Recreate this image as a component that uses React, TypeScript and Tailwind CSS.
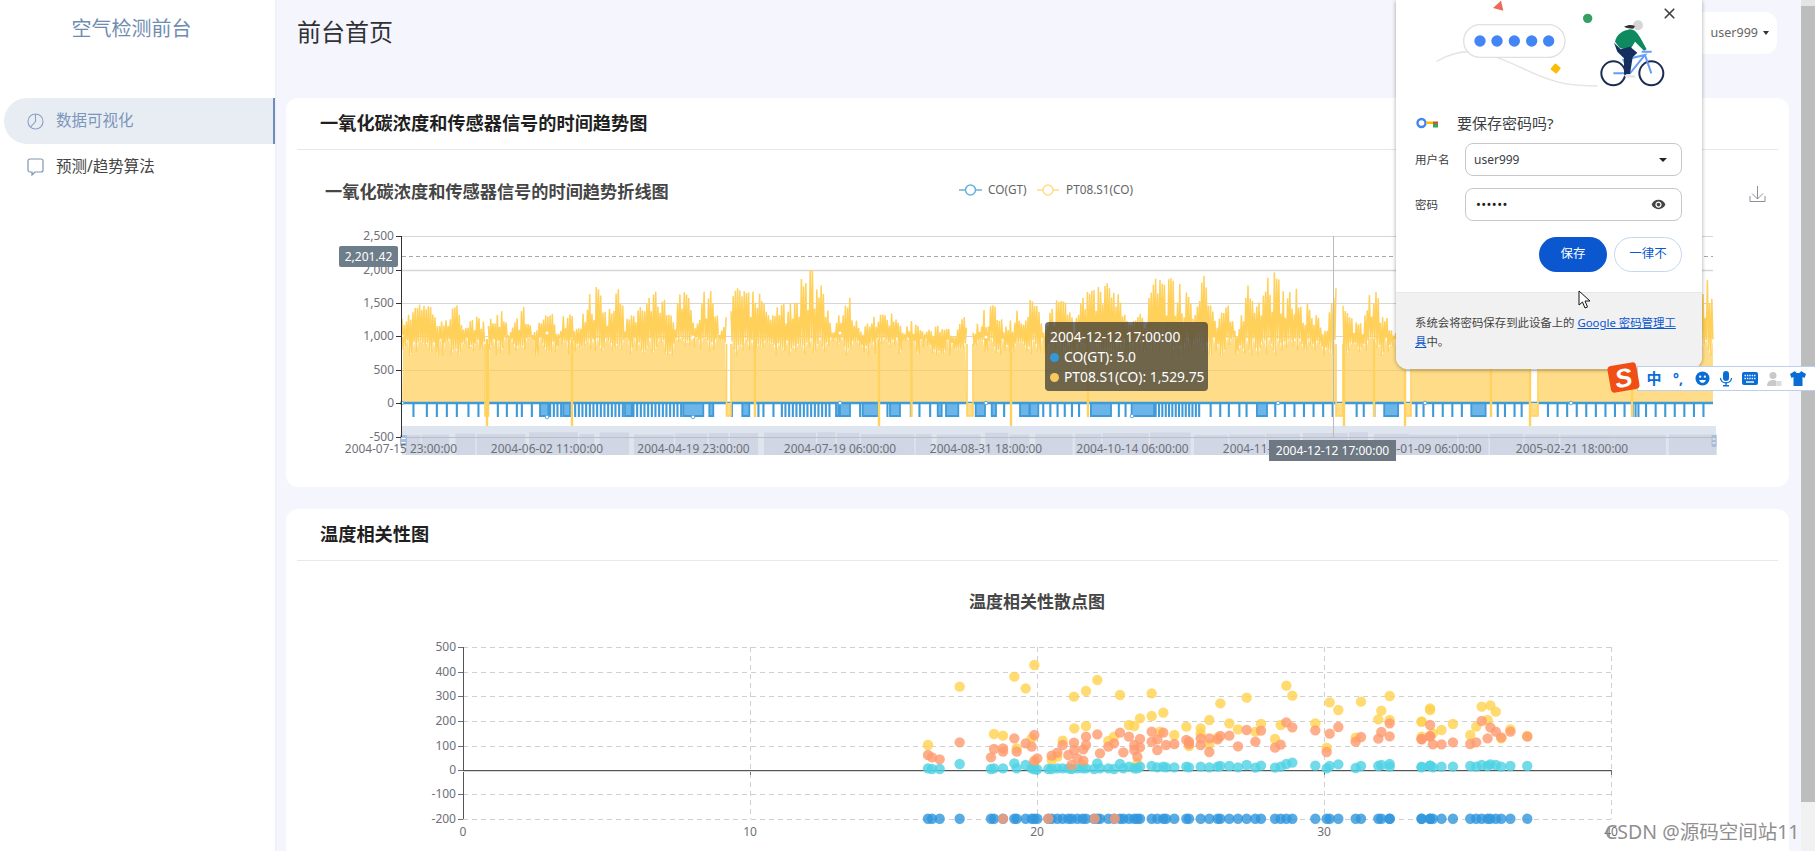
import React from 'react';
import { X } from 'lucide-react';

// seeded random so the picture stays the same each run
function makeRand(seed: number) {
  let s = seed;
  return () => {
    s = (s * 16807) % 2147483647;
    return s / 2147483647;
  };
}

type P = [number, number];
const fromZoom = (list: P[], ox: number, oy: number, fx: number): P[] =>
  list.map(([x, y]) => [ox + x / fx, oy + y / 3] as P);

// upper edge of the yellow series, read off the reference
const envelope: P[] = [
  ...fromZoom(
    [[215, 300], [285, 235], [330, 310], [350, 250], [385, 260], [400, 330], [435, 290], [465, 310], [490, 290], [512, 265], [540, 340], [580, 260], [610, 340], [660, 255], [680, 340], [712, 260], [745, 330], [785, 200], [805, 205], [830, 290], [862, 200], [890, 300], [950, 240], [995, 200], [1030, 310], [1050, 205], [1075, 210], [1100, 290], [1132, 180], [1160, 280], [1170, 330], [1200, 230], [1225, 205], [1250, 215], [1275, 210], [1300, 235], [1320, 300], [1360, 235], [1400, 225], [1420, 160], [1445, 145]],
    330, 220, 3,
  ),
  ...fromZoom(
    [[125, 185], [145, 280], [165, 330], [190, 230], [210, 235], [240, 340], [290, 280], [320, 290], [340, 280], [370, 330], [400, 300], [430, 340], [470, 320], [500, 320], [520, 350], [552, 290], [565, 350], [590, 320], [605, 275], [645, 255], [665, 300], [680, 320], [712, 270], [730, 320], [750, 240]],
    780, 220, 3,
  ),
  ...fromZoom(
    [[25, 250], [40, 320], [70, 230], [105, 225], [130, 290], [170, 195], [230, 175], [265, 210], [290, 290], [320, 260], [345, 270], [370, 165], [435, 160], [480, 220], [522, 155], [540, 240], [565, 280], [590, 230], [620, 330], [655, 180], [680, 240], [716, 135], [745, 145], [770, 200], [808, 180], [840, 250], [890, 310], [915, 165], [930, 230], [960, 280], [1000, 300], [1020, 195], [1040, 190], [1060, 250], [1090, 330]],
    1030, 225, 3,
  ),
  [1450, 260], [1500, 250], [1600, 260], [1700, 290], [1713, 265],
];

const envAt = (x: number) => {
  for (let i = 1; i < envelope.length; i++) {
    if (x <= envelope[i][0]) {
      const [x0, y0] = envelope[i - 1];
      const [x1, y1] = envelope[i];
      return y0 + ((y1 - y0) * (x - x0)) / (x1 - x0 || 1);
    }
  }
  return 300;
};

const gaps: P[] = [[485, 488.5], [726.5, 731], [967, 973], [1336, 1343], [1405, 1411], [1530, 1538]];

function yellowSegments() {
  const rand = makeRand(4711);
  const edges = [402, ...gaps.flat(), 1713];
  const lines: string[] = [];
  const areas: string[] = [];
  for (let i = 0; i < edges.length; i += 2) {
    const pts: P[] = [];
    for (let x = edges[i], n = 0; x < edges[i + 1]; x += 1.1, n++) {
      const top = envAt(x);
      const r = rand();
      const y = n % 2 === 0 ? top + r * r * (345 - top) * 0.6 : 338 + rand() * 19;
      pts.push([x, y]);
    }
    lines.push(pts.map(([x, y]) => `${x.toFixed(1)},${y.toFixed(1)}`).join(' '));
    const low = pts.filter((_, k) => k % 2 === 1);
    areas.push(
      `${edges[i]},404 ` + low.map(([x, y]) => `${x.toFixed(1)},${y.toFixed(1)}`).join(' ') + ` ${edges[i + 1]},404`,
    );
  }
  return { lines, areas };
}

// stems and blocks of the blue series, as [from, to] spans below the zero line
function blueSpans(): P[] {
  const spans: P[] = [];
  const stems = (list: number[], ox: number, f: number) =>
    list.forEach((z) => spans.push([ox + z / f, ox + z / f + 0.3]));
  const block = (a: number, b: number, ox: number, f: number) => spans.push([ox + a / f, ox + b / f]);
  const dense = (a: number, b: number, step: number, ox: number, f: number) => {
    for (let z = a; z <= b; z += step) spans.push([ox + z / f, ox + z / f + 0.3]);
  };

  stems([250, 290, 320, 350, 380, 415, 445, 503, 530, 560, 575, 605], 330, 3);
  block(630, 655, 330, 3);
  dense(660, 696, 11, 330, 3);
  block(700, 720, 330, 3);
  dense(735, 880, 11, 330, 3);
  block(885, 905, 330, 3);
  dense(910, 1055, 11, 330, 3);
  block(1060, 1120, 330, 3);
  block(1138, 1150, 330, 3);
  stems([1205, 1285, 1300, 1330], 330, 3);
  block(1237, 1258, 330, 3);
  dense(1355, 1500, 11, 330, 3);

  block(168, 176, 780, 3);
  block(180, 210, 780, 3);
  stems([240, 322, 392, 418, 450, 672], 780, 3);
  block(248, 295, 780, 3);
  block(330, 360, 780, 3);
  block(473, 485, 780, 3);
  block(498, 535, 780, 3);
  block(587, 615, 780, 3);
  block(635, 648, 780, 3);
  block(720, 748, 780, 3);
  block(750, 775, 780, 3);

  stems([90, 105, 120, 135, 150, 165, 248, 262, 440, 460, 478, 500, 515, 575, 595, 615, 635, 655, 675, 695, 745, 760, 782, 870, 885, 905, 925, 945, 965, 1040, 1055, 1075, 1090, 1145, 1165, 1185, 1205, 1225, 1245, 1265, 1285, 1305, 1350, 1370, 1390, 1410, 1430, 1450, 1470], 1000, 2.09);
  block(190, 232, 1000, 2.09);
  block(275, 322, 1000, 2.09);
  dense(325, 420, 7, 1000, 2.09);
  block(537, 558, 1000, 2.09);
  block(803, 832, 1000, 2.09);
  block(985, 1015, 1000, 2.09);
  dense(1322, 1338, 6, 1000, 2.09);
  return spans.sort((a, b) => a[0] - b[0]);
}

function bluePath() {
  let d = 'M402 404';
  blueSpans().forEach(([a, b]) => {
    d += ` L${a.toFixed(1)} 404 L${a.toFixed(1)} 417 L${b.toFixed(1)} 417 L${b.toFixed(1)} 404`;
  });
  return d + ' L1713 404';
}

function zoomSilhouette() {
  const rand = makeRand(912);
  const out: { x: number; w: number; y: number }[] = [];
  let x = 406;
  while (x < 1712) {
    const w = 14 + rand() * 46;
    out.push({ x, w, y: 433 + rand() * 3 });
    x += w + (rand() < 0.45 ? 1.5 : 7 * rand());
  }
  return out;
}

const yLabels = ['2,500', '2,000', '1,500', '1,000', '500', '0', '-500'];
const yPos = [237, 271, 304, 337, 371, 404, 438];
const xLabels: [string, number][] = [
  ['2004-07-15 23:00:00', 401],
  ['2004-06-02 11:00:00', 547],
  ['2004-04-19 23:00:00', 693.5],
  ['2004-07-19 06:00:00', 840],
  ['2004-08-31 18:00:00', 986],
  ['2004-10-14 06:00:00', 1132.5],
  ['2004-11-27 18:00:00', 1279],
  ['2005-01-09 06:00:00', 1425.5],
  ['2005-02-21 18:00:00', 1572],
];

function TrendChart() {
  const { lines, areas } = yellowSegments();
  const blue = bluePath();
  const silhouette = zoomSilhouette();
  const thinDips: P[] = [[487, 431], [572, 431], [755, 418], [879, 431], [911.5, 418], [1011, 431], [1088, 418], [1344, 431], [1374, 418], [1405, 431], [1491, 418], [1530, 431], [1632, 418]];
  return (
    <svg width={1503} height={336} viewBox="286 151 1503 336" className="block">
      <text x={325} y={199} fontSize={17.2} fontWeight={700} fill="#464646">一氧化碳浓度和传感器信号的时间趋势折线图</text>

      <line x1={959} x2={982} y1={191} y2={191} stroke="#6bb0dc" strokeWidth={1.5} />
      <circle cx={970.5} cy={191} r={5} fill="#fff" stroke="#6bb0dc" strokeWidth={1.5} />
      <text x={988} y={195} fontSize={11.8} fill="#666">CO(GT)</text>
      <line x1={1037} x2={1059} y1={191} y2={191} stroke="#ffdc85" strokeWidth={1.5} />
      <circle cx={1048} cy={191} r={5} fill="#fff" stroke="#ffdc85" strokeWidth={1.5} />
      <text x={1066} y={195} fontSize={11.8} fill="#666">PT08.S1(CO)</text>

      <path d="M1757.5 187v13M1752 194.5l5.500 5.500 5.500-5.500M1750 197v5.500h15V197" fill="none" stroke="#8a8f98" strokeWidth={1} />

      {/* grid */}
      {yPos.map((y) => (
        <line key={y} x1={402} x2={1713} y1={y + 0.5} y2={y + 0.5} stroke="#d6d6d6" strokeWidth={y === 271 ? 1.6 : 1} />
      ))}

      {/* yellow area sits under the blue series, the dips go over it */}
      {areas.map((pts, i) => (
        <polygon key={i} points={pts} fill="#ffcd4f" fillOpacity={0.68} />
      ))}
      {lines.map((pts, i) => (
        <polyline key={i} points={pts} fill="none" stroke="#ffd05a" strokeWidth={1.5} />
      ))}

      <path d={blue + ' Z'} fill="#6cb5e8" stroke="none" />
      <path d={blue} fill="none" stroke="#3f9bd8" strokeWidth={1.8} />
      <line x1={402} x2={1713} y1={404} y2={404} stroke="#3f9bd8" strokeWidth={2.4} />

      {gaps.map(([a, b]) => (
        <g key={a}>
          <rect x={a} y={404} width={b - a} height={13} fill="#ffdc85" />
          <path d={`M${a} 345 V417 H${b} V345`} fill="none" stroke="#ffd25e" strokeWidth={1.6} />
        </g>
      ))}
      {thinDips.map(([x, y]) => (
        <line key={x} x1={x} x2={x} y1={340} y2={y} stroke="#ffd25e" strokeWidth={2.4} />
      ))}

      {/* symbols at the label positions */}
      {[[402, 404], [547, 418], [693, 418], [840, 404], [986, 404], [1132, 417], [1278, 404], [1425, 404], [1571, 404]].map(([x, y]) => (
        <circle key={x} cx={x} cy={y} r={1.8} fill="#fff" stroke="#5dade2" strokeWidth={1} />
      ))}
      {[[402, 337], [547, 334], [693, 338], [840, 334], [986, 338]].map(([x, y]) => (
        <circle key={x} cx={x} cy={y} r={1.5} fill="#fff" />
      ))}

      {/* data zoom */}
      <rect x={402} y={427} width={1314} height={29} fill="#dfe5ef" />
      {silhouette.map((s) => (
        <rect key={s.x} x={s.x} y={s.y} width={s.w} height={456 - s.y} fill="#d0d6e3" />
      ))}
      <line x1={402} x2={1713} y1={438.5} y2={438.5} stroke="#b9bec8" strokeWidth={1} />
      <rect x={400} y={436} width={7} height={11} rx={1} fill="#a9bcd8" />
      <path d="M401.5 439.5h4M401.5 443.5h4" stroke="#fff" strokeWidth={1} />
      <rect x={1711.5} y={436} width={5} height={12} rx={1} fill="#a9bcd8" />
      <path d="M1712.5 440h3M1712.5 444h3" stroke="#fff" strokeWidth={1} />

      {/* axes */}
      <line x1={401.5} x2={401.5} y1={237} y2={438} stroke="#333" strokeWidth={1} />
      {yPos.map((y, i) => (
        <g key={y}>
          <line x1={396} x2={401} y1={y + 0.5} y2={y + 0.5} stroke="#333" strokeWidth={1} />
          <text x={394} y={y + 4} fontSize={12} fill="#6e7079" textAnchor="end">{yLabels[i]}</text>
        </g>
      ))}
      {xLabels.map(([label, x]) => (
        <text key={label} x={x} y={454} fontSize={11.9} fill="#6e7079" textAnchor="middle">{label}</text>
      ))}

      <line x1={402} x2={1713} y1={257.5} y2={257.5} stroke="#a8a8a8" strokeWidth={1} strokeDasharray="4 3" />
      <line x1={1333.5} x2={1333.5} y1={237} y2={438} stroke="#bbb" strokeWidth={1} />
    </svg>
  );
}

// scatter data in crop coordinates of the reference
const leftCrop = {
  yellow: [[24, 315], [119, 140], [222, 282], [249, 287], [283, 110], [290, 325], [317, 145], [335, 295], [343, 75], [343, 370], [395, 360], [412, 350], [428, 302], [462, 170], [463, 265], [498, 153], [498, 258], [532, 120], [565, 303], [582, 290], [600, 165], [627, 255], [643, 258], [660, 235], [695, 160], [695, 228], [730, 218], [720, 275], [652, 370], [488, 375], [455, 385]],
  orange: [[24, 345], [36, 352], [59, 358], [119, 307], [213, 352], [222, 327], [249, 325], [249, 335], [283, 295], [290, 335], [317, 310], [335, 320], [343, 285], [343, 362], [352, 355], [395, 347], [412, 338], [428, 315], [445, 345], [462, 308], [463, 330], [455, 375], [472, 355], [490, 328], [490, 362], [498, 290], [498, 315], [532, 283], [540, 340], [565, 320], [582, 310], [600, 278], [610, 337], [627, 290], [643, 315], [643, 330], [652, 350], [660, 297], [660, 322], [695, 275], [695, 305], [712, 298], [712, 330], [730, 278], [738, 315], [249, 536], [385, 536], [524, 536], [584, 536]],
  cyan: [[24, 385], [36, 387], [59, 387], [119, 372], [213, 387], [222, 385], [249, 385], [283, 370], [290, 385], [317, 375], [335, 385], [343, 388], [352, 388], [385, 387], [395, 387], [412, 385], [428, 385], [445, 385], [455, 387], [472, 385], [488, 385], [498, 385], [522, 387], [532, 370], [540, 385], [565, 385], [582, 387], [600, 372], [610, 385], [627, 380], [643, 385], [652, 385], [660, 380], [695, 378], [712, 382], [730, 380], [738, 382]],
};
const midCrop = {
  yellow: [[13, 285], [49, 260], [92, 265], [92, 280], [57, 318], [118, 240], [118, 312], [151, 190], [143, 292], [178, 250], [204, 268], [230, 173], [256, 275], [273, 252], [315, 297], [332, 255], [349, 137], [367, 167], [436, 250], [470, 323], [479, 187], [505, 210], [557, 293], [573, 185], [625, 238], [634, 212], [659, 168], [659, 240], [755, 245], [755, 290], [780, 205]],
  orange: [[13, 312], [49, 300], [57, 305], [57, 312], [92, 295], [92, 315], [118, 295], [118, 336], [143, 298], [151, 288], [178, 287], [204, 319], [230, 270], [256, 305], [273, 272], [315, 323], [332, 314], [349, 247], [367, 262], [436, 271], [470, 336], [479, 281], [505, 261], [557, 305], [573, 291], [625, 296], [634, 276], [659, 250], [659, 289], [755, 298], [780, 288]],
  cyan: [[13, 382], [49, 380], [57, 382], [92, 380], [118, 382], [143, 380], [151, 378], [178, 378], [204, 382], [230, 375], [256, 383], [273, 377], [315, 383], [332, 380], [349, 372], [367, 368], [436, 377], [470, 385], [479, 378], [505, 373], [557, 384], [573, 378], [625, 378], [634, 375], [659, 372], [659, 380], [755, 380], [780, 377]],
};
const rightCrop = {
  yellow: [[724, 240], [705, 275], [730, 310], [749, 300], [774, 282], [812, 315], [825, 290], [837, 230], [850, 270], [856, 226], [868, 245], [880, 325], [900, 298], [937, 318]],
  orange: [[705, 327], [724, 285], [724, 320], [730, 343], [749, 343], [774, 337], [812, 342], [825, 337], [837, 273], [850, 325], [856, 292], [868, 305], [880, 322], [900, 305], [937, 320]],
  cyan: [[705, 412], [724, 407], [730, 412], [749, 410], [774, 410], [812, 408], [825, 410], [837, 405], [850, 408], [856, 403], [868, 405], [880, 410], [900, 408], [937, 408]],
};

const dots = (key: 'yellow' | 'orange' | 'cyan'): P[] => [
  ...fromZoom(leftCrop[key] as P[], 920, 640, 3),
  ...fromZoom(midCrop[key] as P[], 1170, 640, 3),
  ...fromZoom(rightCrop[key] as P[], 1100, 630, 2.193),
];

function ScatterChart() {
  const hLines: [number, string][] = [[647, '500'], [672, '400'], [696, '300'], [721, '200'], [746, '100'], [770, '0'], [794, '-100'], [819, '-200']];
  const vLines: [number, string][] = [[463, '0'], [750, '10'], [1037, '20'], [1324, '30'], [1611, '40']];
  const cyan = dots('cyan');
  return (
    <svg width={1503} height={300} viewBox="286 561 1503 300" className="block">
      <text x={1037} y={608} fontSize={17} fontWeight={700} fill="#464646" textAnchor="middle">温度相关性散点图</text>

      {hLines.map(([y, label]) => (
        <g key={label}>
          {label !== '0' && <line x1={463} x2={1611} y1={y + 0.5} y2={y + 0.5} stroke="#d0d0d0" strokeDasharray="5 4" />}
          <line x1={458} x2={463} y1={y + 0.5} y2={y + 0.5} stroke="#6e7079" />
          <text x={456} y={y + 4} fontSize={12} fill="#6e7079" textAnchor="end">{label}</text>
        </g>
      ))}
      {vLines.map(([x, label]) => (
        <g key={label}>
          {label !== '0' && <line x1={x + 0.5} x2={x + 0.5} y1={647} y2={819} stroke="#d0d0d0" strokeDasharray="5 4" />}
          <line x1={x + 0.5} x2={x + 0.5} y1={770} y2={775} stroke="#6e7079" />
          <text x={x} y={836} fontSize={12} fill="#6e7079" textAnchor="middle">{label}</text>
        </g>
      ))}
      <line x1={463.5} x2={463.5} y1={647} y2={819} stroke="#555" />
      <line x1={463} x2={1611} y1={770.5} y2={770.5} stroke="#555" />
      <line x1={463} x2={1611} y1={771.5} y2={771.5} stroke="#d8d8d8" />

      {cyan.map(([x], i) => (
        <circle key={i} cx={x} cy={818.7} r={5.2} fill="#2f96dc" fillOpacity={0.8} />
      ))}
      {dots('yellow').map(([x, y], i) => (
        <circle key={i} cx={x} cy={y} r={5.2} fill="#ffd24f" fillOpacity={0.8} />
      ))}
      {cyan.map(([x, y], i) => (
        <circle key={i} cx={x} cy={y} r={5.2} fill="#4fd2e4" fillOpacity={0.8} />
      ))}
      {dots('orange').map(([x, y], i) => (
        <circle key={i} cx={x} cy={y} r={5.2} fill="#ff9a6e" fillOpacity={0.8} />
      ))}
    </svg>
  );
}

function PasswordPopup() {
  return (
    <div className="absolute left-[1396px] top-0 h-[369px] w-[306px] flex flex-col rounded-b-[12px] bg-white overflow-hidden shadow-[0_1px_4px_rgba(0,0,0,0.35)] text-[#3c4043]">
      <div className="relative h-[111px] shrink-0">
        <svg width={300} height={100} viewBox="0 0 900 300" className="absolute left-[4px] top-0">
          <path d="M110 184 C150 160 195 150 240 158 C320 172 390 225 470 245 C510 256 550 258 592 258" fill="none" stroke="#e3e3e3" strokeWidth={4} />
          <rect x={191} y={74} width={304} height={98} rx={49} fill="#fff" stroke="#e0e0e0" strokeWidth={4} />
          {[240, 291, 343, 395, 446].map((x) => (
            <circle key={x} cx={x} cy={123} r={17} fill="#4285f4" />
          ))}
          <path d="M279 24 L303 2 L310 32 Z" fill="#ec6a58" />
          <circle cx={563} cy={55} r={14} fill="#34a062" />
          <rect x={456} y={194} width={23} height={23} rx={3} fill="#fbbc04" transform="rotate(40 467 205)" />
          {/* cyclist */}
          <circle cx={640} cy={220} r={36} fill="none" stroke="#1b2d52" strokeWidth={6} />
          <circle cx={754} cy={220} r={36} fill="none" stroke="#1b2d52" strokeWidth={6} />
          <path d="M640 220 L690 220 L735 165 L670 180 L690 220 M735 165 L754 220 M725 155 L755 155" fill="none" stroke="#669df6" strokeWidth={6} />
          <path d="M645 125 C650 105 665 92 690 88 C705 88 712 100 720 112 L740 148 L732 152 L705 125 L690 150 L660 145 Z" fill="#0d8a5f" />
          <path d="M642 128 L662 148 L690 140 L712 158 L698 172 L690 222 L672 222 L672 175 L652 155 Z" fill="#15305f" />
          <circle cx={714} cy={76} r={15} fill="#d6d6d6" />
          <path d="M672 80 C685 74 695 74 705 78 L700 86 C690 84 680 86 672 80 Z" fill="#333" />
          <path d="M672 225 h30 l6 8 h-30 Z" fill="#e6e6e6" />
        </svg>
        <button className="absolute right-[24px] top-[5px] text-[#444]">
          <X size={17} strokeWidth={2.4} />
        </button>
      </div>

      <div className="flex items-center h-[24px] pl-[20px] shrink-0">
        <svg width={22} height={12} viewBox="0 0 22 12">
          <circle cx={5.5} cy={6} r={4} fill="none" stroke="#4285f4" strokeWidth={2.4} />
          <rect x={10} y={4.5} width={7} height={2.5} fill="#fbbc04" />
          <rect x={17} y={4.5} width={5} height={2.5} fill="#ea4335" />
          <rect x={17} y={6.5} width={5} height={4} fill="#34a853" />
        </svg>
        <span className="ml-[19px] text-[15px]">要保存密码吗?</span>
      </div>

      <div className="flex items-center h-[33px] mt-[8px] pl-[19px] shrink-0">
        <span className="w-[50px] text-[11.5px]">用户名</span>
        <div className="flex items-center justify-between w-[217px] h-[33px] rounded-[8px] border border-[#c6c8cc] pl-[8px] pr-[14px] text-[12px]">
          user999
          <span className="w-0 h-0 border-x-[4px] border-x-transparent border-t-[4px] border-t-[#222]" />
        </div>
      </div>

      <div className="flex items-center h-[33px] mt-[12px] pl-[19px] shrink-0">
        <span className="w-[50px] text-[11.5px]">密码</span>
        <div className="flex items-center justify-between w-[217px] h-[33px] rounded-[8px] border border-[#c6c8cc] pl-[10px] pr-[15px]">
          <span className="text-[13px] tracking-[0.4px] text-[#222]">••••••</span>
          <svg width={15} height={15} viewBox="0 0 24 24" fill="#444">
            <path d="M12 4.5C7 4.5 2.73 7.61 1 12c1.73 4.39 6 7.5 11 7.5s9.27-3.11 11-7.5c-1.73-4.39-6-7.5-11-7.5zM12 17c-2.76 0-5-2.24-5-5s2.24-5 5-5 5 2.24 5 5-2.24 5-5 5zm0-8c-1.66 0-3 1.34-3 3s1.34 3 3 3 3-1.34 3-3-1.34-3-3-3z" />
          </svg>
        </div>
      </div>

      <div className="flex justify-end gap-[7px] mt-[16px] pr-[20px] shrink-0">
        <button className="w-[68px] h-[35px] rounded-full bg-[#0b57d0] text-white text-[12.5px]">保存</button>
        <button className="w-[68px] h-[35px] rounded-full border border-[#c4d7f0] bg-white text-[#0b57d0] text-[12.5px]">一律不</button>
      </div>

      <div className="mt-auto h-[77px] bg-[#f1f1f1] border-t border-[#e8e8e8] pl-[19px] pr-[20px] pt-[20px] text-[11.4px] leading-[19px] text-[#444]">
        系统会将密码保存到此设备上的 <a className="text-[#0b57d0] underline">Google 密码管理工具</a>中。
      </div>
    </div>
  );
}

function ImeBar() {
  return (
    <div className="absolute left-[1637px] right-0 top-[366px] h-[25px] flex items-center pl-[4px] bg-white border border-r-0 border-[#b9d0ee]">
      <span className="w-[24px] text-center text-[15px] font-bold leading-none text-[#0a6dd6]">中</span>
      <span className="w-[24px] text-center text-[14px] font-bold leading-none text-[#0a6dd6]">°,</span>
      <span className="w-[24px] flex justify-center">
        <svg width={15} height={15} viewBox="0 0 16 16">
          <circle cx={8} cy={8} r={7.5} fill="#0a6dd6" />
          <circle cx={5.5} cy={6} r={1.2} fill="#fff" />
          <circle cx={10.5} cy={6} r={1.2} fill="#fff" />
          <path d="M4.5 9.5h7c-.5 2-2 3-3.5 3s-3-1-3.5-3z" fill="#fff" />
        </svg>
      </span>
      <span className="w-[24px] flex justify-center">
        <svg width={14} height={16} viewBox="0 0 14 16" fill="#0a6dd6">
          <rect x={4} y={0} width={6} height={10} rx={3} />
          <path d="M1.5 7c0 3 2.5 4.8 5.5 4.8S12.5 10 12.5 7" fill="none" stroke="#0a6dd6" strokeWidth={1.3} />
          <rect x={6.3} y={11.5} width={1.4} height={3} />
          <rect x={4} y={14} width={6} height={1.5} />
        </svg>
      </span>
      <span className="w-[24px] flex justify-center">
        <svg width={16} height={13} viewBox="0 0 16 13">
          <rect width={16} height={13} rx={2} fill="#0a6dd6" />
          <path d="M2.5 3.5h11M2.5 6.500h11" stroke="#fff" strokeWidth={1.4} strokeDasharray="1.4 1" />
          <path d="M4 10h8" stroke="#fff" strokeWidth={1.4} />
        </svg>
      </span>
      <span className="w-[24px] flex justify-center">
        <svg width={16} height={16} viewBox="0 0 16 16" fill="#c9c9c9">
          <circle cx={7} cy={4.5} r={3.5} />
          <path d="M1 15c0-4 2.5-6 6-6 1.5 0 2.5.3 3.5 1v5z" />
          <rect x={10.5} y={10} width={5} height={5} fill="#ddd" />
        </svg>
      </span>
      <span className="w-[24px] flex justify-center">
        <svg width={16} height={15} viewBox="0 0 16 15" fill="#0a6dd6">
          <path d="M5 0L0 3l1.500 4L3.500 6v9h9V6l2 1L16 3l-5-3c-.5 1.500-1.500 2-3 2S5.500 1.500 5 0z" />
        </svg>
      </span>
    </div>
  );
}

export default function App() {
  return (
    <div className="relative flex h-screen w-full overflow-hidden bg-[#f5f5fd] text-[#333] [font-family:'Noto_Sans','Noto_Sans_CJK_SC',sans-serif]">
      {/* sidebar */}
      <aside className="w-[275px] shrink-0 bg-white shadow-[1px_0_2px_rgba(0,0,0,0.04)]">
        <div className="h-[98px] pt-[14px] pr-[12px] text-center text-[20px] leading-[30px] text-[#6f8db0]">空气检测前台</div>
        <nav className="flex flex-col">
          <a className="flex items-center gap-[12px] h-[46px] ml-[4px] pl-[23px] rounded-l-full bg-[#e8edf4] border-r-2 border-[#6d8cbc] text-[15.5px] text-[#7c95ba]">
            <svg width={17} height={17} viewBox="0 0 17 17" fill="none" stroke="#8aa0c0" strokeWidth={1.1}>
              <circle cx={8.5} cy={8.5} r={7.5} />
              <path d="M8.5 1v7.5L3.5 14" />
            </svg>
            数据可视化
          </a>
          <a className="flex items-center gap-[12px] h-[46px] ml-[4px] pl-[23px] text-[15.5px] text-[#444]">
            <svg width={17} height={18} viewBox="0 0 17 18" fill="none" stroke="#7f97b8" strokeWidth={1.2}>
              <path d="M3 1h11a2 2 0 0 1 2 2v9a2 2 0 0 1-2 2H8l-3 3v-3H3a2 2 0 0 1-2-2V3a2 2 0 0 1 2-2z" />
            </svg>
            预测/趋势算法
          </a>
        </nav>
      </aside>

      {/* main */}
      <main className="flex-1 min-w-0 pl-[11px] pr-[12px]">
        <header className="flex h-[98px] items-start pl-[11px] pr-[12px]">
          <h1 className="mt-[14px] text-[24px] leading-[36px] font-normal text-[#303133]">前台首页</h1>
          <div className="ml-auto mt-[12px] flex h-[42px] w-[100px] items-center justify-end gap-[5px] rounded-[12px] bg-white pr-[8px] text-[12.5px] text-[#666]">
            user999
            <span className="w-0 h-0 border-x-[3.5px] border-x-transparent border-t-[4px] border-t-[#333]" />
          </div>
        </header>

        <section className="h-[389px] rounded-[12px] bg-white">
          <div className="mx-[11px] h-[52px] border-b border-[#e6e8ec] pl-[23px] flex items-center">
            <h2 className="text-[18.2px] font-bold text-[#1f1f1f]">一氧化碳浓度和传感器信号的时间趋势图</h2>
          </div>
          <div className="relative">
            <TrendChart />
            <div className="absolute left-[53px] top-[96px] flex h-[21px] w-[59px] items-center justify-center rounded-[2px] bg-[#6e7d8a] text-[12px] text-white">2,201.42</div>
            <div className="absolute left-[983px] top-[290px] flex h-[21px] w-[127px] items-center justify-center bg-[#6e7883] text-[12px] text-white">2004-12-12 17:00:00</div>
            <div className="absolute left-[759px] top-[172px] h-[69px] w-[163px] rounded-[4px] bg-[rgba(50,50,50,0.7)] pl-[5px] pt-[5px] text-[13.8px] leading-[20px] text-white">
              <div>2004-12-12 17:00:00</div>
              <div className="flex items-center gap-[5px]">
                <span className="h-[9px] w-[9px] rounded-full bg-[#3498db]" />
                CO(GT): 5.0
              </div>
              <div className="flex items-center gap-[5px]">
                <span className="h-[9px] w-[9px] rounded-full bg-[#f8c95f]" />
                PT08.S1(CO): 1,529.75
              </div>
            </div>
          </div>
        </section>

        <section className="mt-[22px] h-[400px] rounded-[12px] bg-white">
          <div className="mx-[11px] h-[52px] border-b border-[#e6e8ec] pl-[23px] flex items-center">
            <h2 className="text-[18.2px] font-bold text-[#1f1f1f]">温度相关性图</h2>
          </div>
          <ScatterChart />
        </section>
      </main>

      {/* scrollbar */}
      <div className="flex w-[14px] shrink-0 flex-col bg-[#f1f1f1]">
        <div className="h-[6px] bg-[#e4e4e4]" />
        <div className="h-[796px] bg-[#bdbdbd]" />
      </div>

      <PasswordPopup />
      <ImeBar />

      {/* sogou badge */}
      <div className="absolute left-[1609px] top-[364px] flex h-[27px] w-[29px] -rotate-[10deg] items-center justify-center rounded-[4px] bg-[#f04e14] text-[26px] font-bold italic leading-none text-white [font-family:'Liberation_Sans',sans-serif]">S</div>

      {/* mouse pointer */}
      <svg width={14} height={19} viewBox="0 0 14 19" className="absolute left-[1578px] top-[290px]">
        <path d="M1 1v14l3.5-3 2.5 6 2.5-1-2.5-6h5z" fill="#fff" stroke="#111" strokeWidth={1} />
      </svg>

      <div className="absolute left-[1605px] top-[818px] text-[19.5px] leading-[28px] text-[#8f8f8f]">CSDN @源码空间站11</div>
    </div>
  );
}
